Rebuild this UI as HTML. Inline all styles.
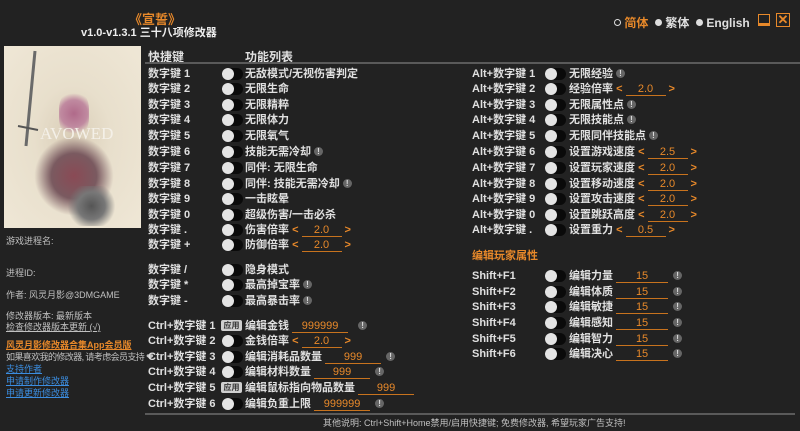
<!DOCTYPE html>
<html><head><meta charset="utf-8"><style>
*{margin:0;padding:0;box-sizing:border-box}
body{width:800px;height:431px;background:#222222;overflow:hidden;position:relative;font-family:"Liberation Sans","Noto Sans CJK SC",sans-serif;color:#e0e0e0;font-size:11px;font-weight:bold}
.a{position:absolute;white-space:nowrap}
.r{position:absolute;height:14px;line-height:14px;white-space:nowrap}
.r>*{position:absolute;top:0}
.tg{width:21px;height:12px;top:1px;border-radius:6px;background:#0a0a0a}
.tg:before{content:"";position:absolute;left:0;top:0;width:12px;height:12px;border-radius:50%;background:#e4e4e4}
.o{color:#e8892a}
.sp{color:#e8892a;font-weight:bold}
.sp i{font-style:normal;display:inline-block;width:40px;text-align:center;border-bottom:1px solid #c8731e;line-height:11px;font-weight:normal;margin:0 3px}
.in{display:inline-block;border-bottom:1px solid #c8731e;color:#e8892a;text-align:center;line-height:11px;font-weight:normal}
.ex{display:inline-block;width:9px;height:9px;border-radius:50%;background:#666;color:#ddd;font-size:8px;line-height:9px;text-align:center;vertical-align:1px;margin-left:3px}
.ap{width:21px;height:11px;top:1px;background:#cfcfcf;color:#333;font-size:8px;line-height:11px;text-align:center;border-radius:2px}
.sm{font-weight:normal;font-size:9px;line-height:11px;color:#c0c0c0}
.lk{color:#3b8de0;text-decoration:underline;font-weight:normal;font-size:9px;line-height:11px}
</style></head><body>
<div class="a o" style="left:129px;top:9px;font-size:13px">《宣誓》</div>
<div class="a" style="left:81px;top:24px;font-size:11px;color:#eee">v1.0-v1.3.1 三十八项修改器</div>

<div class="a" style="left:614px;top:14px;font-size:12px"><span style="display:inline-block;width:7px;height:7px;border:1.5px solid #ddd;border-radius:50%;vertical-align:1px"></span> <span class="o">简体</span> &nbsp;<span style="display:inline-block;width:7px;height:7px;background:#ddd;border-radius:50%;vertical-align:1px"></span> 繁体 &nbsp;<span style="display:inline-block;width:7px;height:7px;background:#ddd;border-radius:50%;vertical-align:1px"></span> English</div>
<div class="a" style="left:758px;top:14px;width:12px;height:12px;border:1.5px solid #e8892a;border-bottom-width:3px"></div>
<div class="a" style="left:776px;top:13px;width:14px;height:14px;border:1.5px solid #e8892a;color:#e8892a;font-size:13px;line-height:11px;text-align:center">✕</div>

<div class="a" style="left:4px;top:46px;width:137px;height:182px;background:radial-gradient(ellipse at 50% 50%,#d9cdb7 0%,#e8dfcc 40%,#efe7d6 100%);overflow:hidden">
 <div class="a" style="left:30px;top:90px;width:80px;height:80px;border-radius:40%;background:radial-gradient(circle,#8a4a55 0%,#7a5a60 40%,rgba(120,90,90,0) 70%)"></div>
 <div class="a" style="left:55px;top:45px;width:30px;height:45px;border-radius:40%;background:radial-gradient(circle,#b06a8a,#c08aa0 50%,rgba(200,150,170,0) 75%)"></div>
 <div class="a" style="left:60px;top:140px;width:55px;height:40px;background:radial-gradient(circle,#555 0%,#777 40%,rgba(150,150,150,0) 70%)"></div>
 <svg class="a" style="left:0;top:0" width="137" height="182"><line x1="31" y1="5" x2="22" y2="100" stroke="#6a6a6a" stroke-width="3"/><line x1="14" y1="80" x2="34" y2="84" stroke="#555" stroke-width="2"/></svg>
 <div class="a" style="left:36px;top:78px;font-size:17px;font-weight:normal;color:#f4f0e8;font-family:'Liberation Serif',serif">AVOWED</div>
</div>

<div class="a sm" style="left:6px;top:236px">游戏进程名:</div>
<div class="a sm" style="left:6px;top:268px">进程ID:</div>
<div class="a sm" style="left:6px;top:290px">作者: 风灵月影@3DMGAME</div>
<div class="a sm" style="left:6px;top:311px">修改器版本: 最新版本</div>
<div class="a sm" style="left:6px;top:322px;text-decoration:underline">检查修改器版本更新 (√)</div>
<div class="a o" style="left:6px;top:340px;font-size:9px;line-height:11px;text-decoration:underline">风灵月影修改器合集App会员版</div>
<div class="a sm" style="left:6px;top:352px;letter-spacing:-0.6px">如果喜欢我的修改器, 请考虑会员支持 ❤</div>
<div class="a lk" style="left:6px;top:364px">支持作者</div>
<div class="a lk" style="left:6px;top:376px">申请制作修改器</div>
<div class="a lk" style="left:6px;top:388px">申请更新修改器</div>

<div class="a" style="left:148px;top:48px;font-size:12px">快捷键</div>
<div class="a" style="left:245px;top:48px;font-size:12px">功能列表</div>
<div class="a" style="left:145px;top:62px;width:655px;height:2px;background:#5a5a5a"></div>

<div class="r" style="left:148px;top:67px"><span>数字键 1</span><span class="tg" style="left:74px"></span><span style="left:97px">无敌模式/无视伤害判定</span></div>
<div class="r" style="left:148px;top:82px"><span>数字键 2</span><span class="tg" style="left:74px"></span><span style="left:97px">无限生命</span></div>
<div class="r" style="left:148px;top:98px"><span>数字键 3</span><span class="tg" style="left:74px"></span><span style="left:97px">无限精粹</span></div>
<div class="r" style="left:148px;top:113px"><span>数字键 4</span><span class="tg" style="left:74px"></span><span style="left:97px">无限体力</span></div>
<div class="r" style="left:148px;top:129px"><span>数字键 5</span><span class="tg" style="left:74px"></span><span style="left:97px">无限氧气</span></div>
<div class="r" style="left:148px;top:145px"><span>数字键 6</span><span class="tg" style="left:74px"></span><span style="left:97px">技能无需冷却<b class="ex">!</b></span></div>
<div class="r" style="left:148px;top:161px"><span>数字键 7</span><span class="tg" style="left:74px"></span><span style="left:97px">同伴: 无限生命</span></div>
<div class="r" style="left:148px;top:177px"><span>数字键 8</span><span class="tg" style="left:74px"></span><span style="left:97px">同伴: 技能无需冷却<b class="ex">!</b></span></div>
<div class="r" style="left:148px;top:192px"><span>数字键 9</span><span class="tg" style="left:74px"></span><span style="left:97px">一击眩晕</span></div>
<div class="r" style="left:148px;top:208px"><span>数字键 0</span><span class="tg" style="left:74px"></span><span style="left:97px">超级伤害/一击必杀</span></div>
<div class="r" style="left:148px;top:223px"><span>数字键 .</span><span class="tg" style="left:74px"></span><span style="left:97px">伤害倍率 <span class="sp">&lt;<i>2.0</i>&gt;</span></span></div>
<div class="r" style="left:148px;top:238px"><span>数字键 +</span><span class="tg" style="left:74px"></span><span style="left:97px">防御倍率 <span class="sp">&lt;<i>2.0</i>&gt;</span></span></div>
<div class="r" style="left:148px;top:263px"><span>数字键 /</span><span class="tg" style="left:74px"></span><span style="left:97px">隐身模式</span></div>
<div class="r" style="left:148px;top:278px"><span>数字键 *</span><span class="tg" style="left:74px"></span><span style="left:97px">最高掉宝率<b class="ex">!</b></span></div>
<div class="r" style="left:148px;top:294px"><span>数字键 -</span><span class="tg" style="left:74px"></span><span style="left:97px">最高暴击率<b class="ex">!</b></span></div>
<div class="r" style="left:148px;top:319px"><span>Ctrl+数字键 1</span><span class="ap" style="left:73px">应用</span><span style="left:97px">编辑金钱 <span class="in" style="width:56px">999999</span><b class="ex" style="margin-left:10px">!</b></span></div>
<div class="r" style="left:148px;top:334px"><span>Ctrl+数字键 2</span><span class="tg" style="left:74px"></span><span style="left:97px">金钱倍率 <span class="sp">&lt;<i>2.0</i>&gt;</span></span></div>
<div class="r" style="left:148px;top:350px"><span>Ctrl+数字键 3</span><span class="tg" style="left:74px"></span><span style="left:97px">编辑消耗品数量 <span class="in" style="width:56px">999</span><b class="ex" style="margin-left:5px">!</b></span></div>
<div class="r" style="left:148px;top:365px"><span>Ctrl+数字键 4</span><span class="tg" style="left:74px"></span><span style="left:97px">编辑材料数量 <span class="in" style="width:56px">999</span><b class="ex" style="margin-left:5px">!</b></span></div>
<div class="r" style="left:148px;top:381px"><span>Ctrl+数字键 5</span><span class="ap" style="left:73px">应用</span><span style="left:97px">编辑鼠标指向物品数量 <span class="in" style="width:56px">999</span></span></div>
<div class="r" style="left:148px;top:397px"><span>Ctrl+数字键 6</span><span class="tg" style="left:74px"></span><span style="left:97px">编辑负重上限 <span class="in" style="width:56px">999999</span><b class="ex" style="margin-left:5px">!</b></span></div>

<div class="r" style="left:472px;top:67px"><span>Alt+数字键 1</span><span class="tg" style="left:73px"></span><span style="left:97px">无限经验<b class="ex">!</b></span></div>
<div class="r" style="left:472px;top:82px"><span>Alt+数字键 2</span><span class="tg" style="left:73px"></span><span style="left:97px">经验倍率 <span class="sp">&lt;<i>2.0</i>&gt;</span></span></div>
<div class="r" style="left:472px;top:98px"><span>Alt+数字键 3</span><span class="tg" style="left:73px"></span><span style="left:97px">无限属性点<b class="ex">!</b></span></div>
<div class="r" style="left:472px;top:113px"><span>Alt+数字键 4</span><span class="tg" style="left:73px"></span><span style="left:97px">无限技能点<b class="ex">!</b></span></div>
<div class="r" style="left:472px;top:129px"><span>Alt+数字键 5</span><span class="tg" style="left:73px"></span><span style="left:97px">无限同伴技能点<b class="ex">!</b></span></div>
<div class="r" style="left:472px;top:145px"><span>Alt+数字键 6</span><span class="tg" style="left:73px"></span><span style="left:97px">设置游戏速度 <span class="sp">&lt;<i>2.5</i>&gt;</span></span></div>
<div class="r" style="left:472px;top:161px"><span>Alt+数字键 7</span><span class="tg" style="left:73px"></span><span style="left:97px">设置玩家速度 <span class="sp">&lt;<i>2.0</i>&gt;</span></span></div>
<div class="r" style="left:472px;top:177px"><span>Alt+数字键 8</span><span class="tg" style="left:73px"></span><span style="left:97px">设置移动速度 <span class="sp">&lt;<i>2.0</i>&gt;</span></span></div>
<div class="r" style="left:472px;top:192px"><span>Alt+数字键 9</span><span class="tg" style="left:73px"></span><span style="left:97px">设置攻击速度 <span class="sp">&lt;<i>2.0</i>&gt;</span></span></div>
<div class="r" style="left:472px;top:208px"><span>Alt+数字键 0</span><span class="tg" style="left:73px"></span><span style="left:97px">设置跳跃高度 <span class="sp">&lt;<i>2.0</i>&gt;</span></span></div>
<div class="r" style="left:472px;top:223px"><span>Alt+数字键 .</span><span class="tg" style="left:73px"></span><span style="left:97px">设置重力 <span class="sp">&lt;<i>0.5</i>&gt;</span></span></div>
<div class="a o" style="left:472px;top:247px">编辑玩家属性</div>
<div class="r" style="left:472px;top:269px"><span>Shift+F1</span><span class="tg" style="left:73px"></span><span style="left:97px">编辑力量 <span class="in" style="width:52px">15</span><b class="ex" style="margin-left:5px">!</b></span></div>
<div class="r" style="left:472px;top:285px"><span>Shift+F2</span><span class="tg" style="left:73px"></span><span style="left:97px">编辑体质 <span class="in" style="width:52px">15</span><b class="ex" style="margin-left:5px">!</b></span></div>
<div class="r" style="left:472px;top:300px"><span>Shift+F3</span><span class="tg" style="left:73px"></span><span style="left:97px">编辑敏捷 <span class="in" style="width:52px">15</span><b class="ex" style="margin-left:5px">!</b></span></div>
<div class="r" style="left:472px;top:316px"><span>Shift+F4</span><span class="tg" style="left:73px"></span><span style="left:97px">编辑感知 <span class="in" style="width:52px">15</span><b class="ex" style="margin-left:5px">!</b></span></div>
<div class="r" style="left:472px;top:332px"><span>Shift+F5</span><span class="tg" style="left:73px"></span><span style="left:97px">编辑智力 <span class="in" style="width:52px">15</span><b class="ex" style="margin-left:5px">!</b></span></div>
<div class="r" style="left:472px;top:347px"><span>Shift+F6</span><span class="tg" style="left:73px"></span><span style="left:97px">编辑决心 <span class="in" style="width:52px">15</span><b class="ex" style="margin-left:5px">!</b></span></div>

<div class="a" style="left:145px;top:413px;width:650px;height:2px;background:#5a5a5a"></div>
<div class="a sm" style="left:323px;top:418px;font-size:9px">其他说明: Ctrl+Shift+Home禁用/启用快捷键; 免费修改器, 希望玩家广告支持!</div>
</body></html>
